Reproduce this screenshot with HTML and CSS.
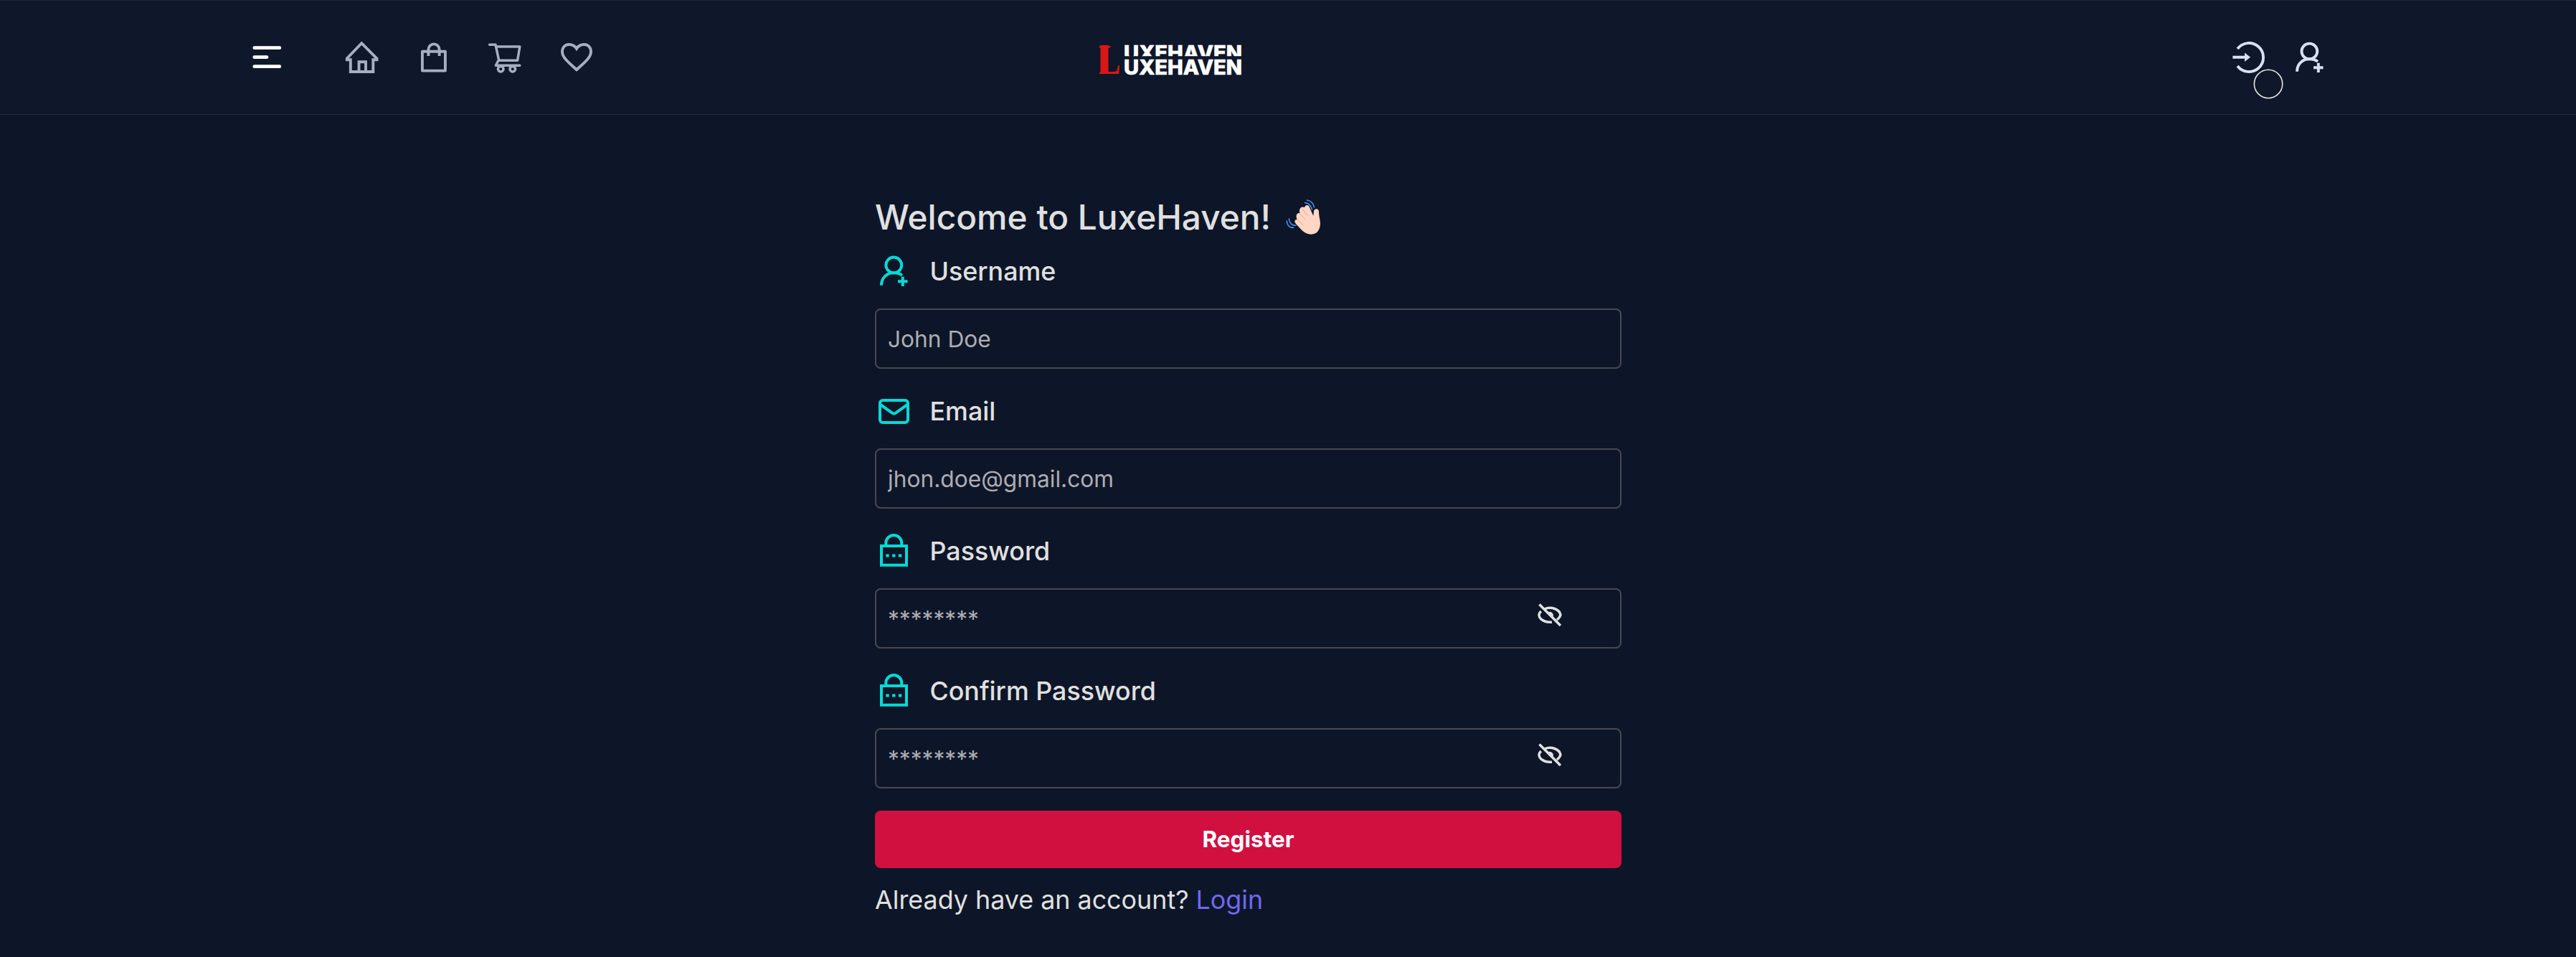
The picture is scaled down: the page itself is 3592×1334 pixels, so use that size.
FILE: index.html
```html
<!DOCTYPE html>
<html lang="en">
<head>
<meta charset="utf-8">
<title>LuxeHaven</title>
<link rel="stylesheet" href="styles.css">
</head>
<body>
<svg class="defs" width="0" height="0" aria-hidden="true">
  <symbol id="user-plus" viewBox="3200 56 42 48">
    <circle cx="3220.3" cy="71.5" r="10.9"/>
    <path d="M3203 99.7C3203 89.5 3210.5 82.3 3220.3 82.3C3225 82.3 3229 83.6 3232 85.8M3226 94.3H3239.5M3232.8 87.8V101"/>
  </symbol>
  <symbol id="lock" viewBox="1225 742 43 50">
    <path d="M1229 761H1264V787.7H1229ZM1235.3 761V757A11 11 0 0 1 1257.3 757V761"/>
    <path d="M1235.3 774.4h4.4M1244.1 774.4h4.4M1252.9 774.4h4.4"/>
  </symbol>
  <symbol id="eye-off" viewBox="2143 839 36 34">
    <path d="M2153.5 848C2163 844 2174.5 848 2176 856C2175.500 859 2173.500 861 2171 863M2148.800 851C2144.800 855 2145.500 859 2149 862.200C2153 865.500 2158 866.700 2164 866.200M2146.500 841.500L2176 871"/>
    <path class="pupil" d="M2157 852.500C2161 850.500 2166 852.500 2166 857L2165 861Z"/>
  </symbol>
</svg>

<header class="header">
  <nav class="nav">
    <svg class="icon menu" width="42" height="34" viewBox="351 63 42 34"><path d="M354.800 66.700H389.800M354.800 79.700H372M354.800 92.700H389.800"/></svg>
    <svg class="icon home" width="50" height="48" viewBox="480 56 50 48"><path d="M488.800 83.300H483.800V81.500L504.300 60.200L525.500 81.500V83.300H520.300V100H488.800ZM500.500 99V86.300H510V99"/></svg>
    <svg class="icon bag" width="40" height="46" viewBox="585 58 40 46"><path d="M588.900 71.800H620.900V98.600H588.900ZM597.400 78V69A7.600 7.600 0 0 1 612.600 69V78"/></svg>
    <svg class="icon cart" width="50" height="46" viewBox="679 58 50 46"><path d="M682.600 62.300H691L695.800 84.500M691.600 65H724.800L721.600 84.300H695L691.300 91.300H724.800"/><circle cx="698.200" cy="96.200" r="3.800"/><circle cx="714.800" cy="96.200" r="3.800"/></svg>
    <svg class="icon heart" width="48" height="44" viewBox="780.500 58 48 44"><path d="M804.500 97.200C795 88.500 784.500 80.500 784.500 72.200C784.500 66 788.500 62 794 62C799 62 802.500 64.500 804.500 67.700C806.500 64.500 810 62 815 62C820.500 62 824.500 66 824.500 72.200C824.500 80.500 814 88.500 804.500 97.200Z"/></svg>
  </nav>
  <svg class="logo" width="206" height="44" viewBox="1528 62 206 44">
    <clipPath id="top-half"><rect x="1528" y="62" width="206" height="16.300"/></clipPath>
    <text class="logo-l" x="1532" y="102.500" textLength="31" lengthAdjust="spacingAndGlyphs">L</text>
    <rect class="logo-stem" x="1534.500" y="63" width="11" height="39.500"/>
    <g clip-path="url(#top-half)"><text class="logo-word" x="1567" y="84.300" textLength="165" lengthAdjust="spacingAndGlyphs">UXEHAVEN</text></g>
    <text class="logo-word" x="1567" y="104" textLength="165" lengthAdjust="spacingAndGlyphs">UXEHAVEN</text>
  </svg>
  <div class="account">
    <svg class="icon login" width="50" height="48" viewBox="3111 56 50 48"><path d="M3120 68A20 20 0 1 1 3120 92M3113.300 79.800H3131"/><path class="arrow" d="M3130 73.600L3138 79.800L3130 86Z"/></svg>
    <svg class="icon" width="42" height="48"><use href="#user-plus"/></svg>
    <svg class="cursor-ring" width="42" height="42" viewBox="0 0 42 42"><circle cx="21" cy="21" r="19.700"/></svg>
  </div>
</header>

<main class="form">
  <h1 class="title">Welcome to LuxeHaven!
    <svg class="wave" width="50" height="50" viewBox="40 55 150 150">
      <path class="skin" d="M118 88C123 74 137 78 139 88L155 124L157 103C160 92 176 92 178 104C177 120 183 138 184 154C184 182 170 201 146 201C128 201 116 192 105 182L82 157C72 146 81 136 88 140C78 122 88 107 99 113C93 94 103 82 118 88Z"/>
      <path class="crease" d="M110 97L132 123M97 113L119 137M88 139L110 160"/>
      <path class="motion" d="M120 69C134 69 146 81 149 97M129 58C146 60 157 74 158 88M44 145C44 162 55 174 72 173M53 136C55 153 65 164 82 164"/>
    </svg>
  </h1>

  <div class="field">
    <label class="label" for="username"><svg class="label-icon" width="42" height="48"><use href="#user-plus"/></svg>Username</label>
    <div class="box"><input class="input" id="username" type="text" placeholder="John Doe"></div>
  </div>
  <div class="field">
    <label class="label" for="email"><svg class="label-icon" width="47" height="39" viewBox="1223 553.500 47 39"><rect x="1227" y="557.500" width="39" height="31" rx="4"/><path d="M1227 563L1244 575Q1246.500 577 1249 575L1266 563"/></svg>Email</label>
    <div class="box"><input class="input" id="email" type="text" placeholder="jhon.doe@gmail.com"></div>
  </div>
  <div class="field">
    <label class="label" for="password"><svg class="label-icon lock" width="43" height="50"><use href="#lock"/></svg>Password</label>
    <div class="box"><input class="input" id="password" type="password" placeholder="********"><svg class="eye" width="36" height="34"><use href="#eye-off"/></svg></div>
  </div>
  <div class="field">
    <label class="label" for="confirm"><svg class="label-icon lock" width="43" height="50"><use href="#lock"/></svg>Confirm Password</label>
    <div class="box"><input class="input" id="confirm" type="password" placeholder="********"><svg class="eye" width="36" height="34"><use href="#eye-off"/></svg></div>
  </div>

  <button class="register" type="button">Register</button>
  <p class="switch">Already have an account? <a class="link" href="#">Login</a></p>
</main>
</body>
</html>
```
FILE: styles.css
```css
* { box-sizing: border-box; }

body {
  margin: 0;
  height: 1334px;
  overflow: hidden;
  background: #0d1628;
  color: #e0e0e0;
  font-family: Inter, "Liberation Sans", sans-serif;
}

.defs { position: absolute; }

.header {
  display: flex;
  justify-content: space-between;
  height: 160px;
  padding: 55px 350px 0 351px;
  background: #0f172a;
  border-top: 1px solid #1e293b;
  border-bottom: 1px solid #1e293b;
}

.nav { display: flex; align-items: flex-start; width: 1177px; color: #a5afc4; }

.icon { fill: none; stroke: currentColor; stroke-width: 3.9; stroke-linejoin: round; }

.menu { margin-top: 7px; color: #fff; stroke-width: 4.8; stroke-linecap: round; }
.home { margin-left: 87px; stroke-linejoin: miter; }
.bag { margin: 2px 0 0 55px; }
.cart { margin: 2px 0 0 54px; stroke-width: 3.5; stroke-linecap: round; }
.heart { margin: 2px 0 0 51px; stroke-linejoin: miter; }

.logo { margin-top: 6px; overflow: visible; }
.logo-l { fill: #dc1616; font: bold 60px "Liberation Serif", serif; }
.logo-stem { fill: #dc1616; }
.logo-word { fill: #fff; stroke: #fff; stroke-width: 0.6; font: 800 28px Inter, sans-serif; }

.account {
  position: relative;
  display: flex;
  gap: 39px;
  width: 1508px;
  justify-content: flex-end;
  color: #d8e0f2;
}
.arrow { fill: currentColor; stroke: none; }

.cursor-ring {
  position: absolute;
  top: 39.500px;
  right: 58.500px;
  fill: none;
  stroke: #e8e6e3;
  stroke-width: 1.600;
}

.form { width: 1041px; margin-left: 1220px; padding-top: 112px; }

.title {
  display: flex;
  align-items: center;
  gap: 21px;
  height: 61px;
  margin: 0 0 19px;
  font-size: 47.800px;
  font-weight: 500;
}
.skin { fill: #ffd6c4; }
.crease { fill: none; stroke: #efb9a0; stroke-width: 4; stroke-linecap: round; }
.motion { fill: none; stroke: #4a8df0; stroke-width: 5; stroke-linecap: round; }

.field { height: 195px; }

.label {
  display: grid;
  grid-template-columns: 53px auto;
  justify-items: center;
  justify-content: start;
  align-items: center;
  column-gap: 23.500px;
  height: 52px;
  margin-bottom: 26px;
  font-size: 35.800px;
  font-weight: 500;
}
.label-icon { fill: none; stroke: #08d9d6; stroke-width: 4; }
.lock { margin-top: -2px; }

.box {
  display: flex;
  align-items: center;
  height: 84px;
  padding: 0 80px 0 16px;
  border: 2px solid #47494f;
  border-radius: 8px;
}
.input {
  flex: 1;
  min-width: 0;
  padding: 0;
  border: 0;
  outline: 0;
  background: none;
  font: 400 31.700px Inter, "Liberation Sans", sans-serif;
}
.input::placeholder { color: #adadb3; opacity: 1; }

.eye { margin-top: -11px; fill: none; stroke: #e0e0e0; stroke-width: 3.5; }
.pupil { fill: #e0e0e0; stroke: none; }

.register {
  display: block;
  width: 1041px;
  height: 80px;
  margin-top: -2px;
  padding: 0 0 1px;
  border: 0;
  border-radius: 8px;
  background: #d21040;
  color: #fff;
  font: 700 31.500px Inter, "Liberation Sans", sans-serif;
}

.switch { margin: 22px 0 0; font-size: 35.850px; line-height: 44px; }
.link { color: #7068f0; text-decoration: none; }
```
